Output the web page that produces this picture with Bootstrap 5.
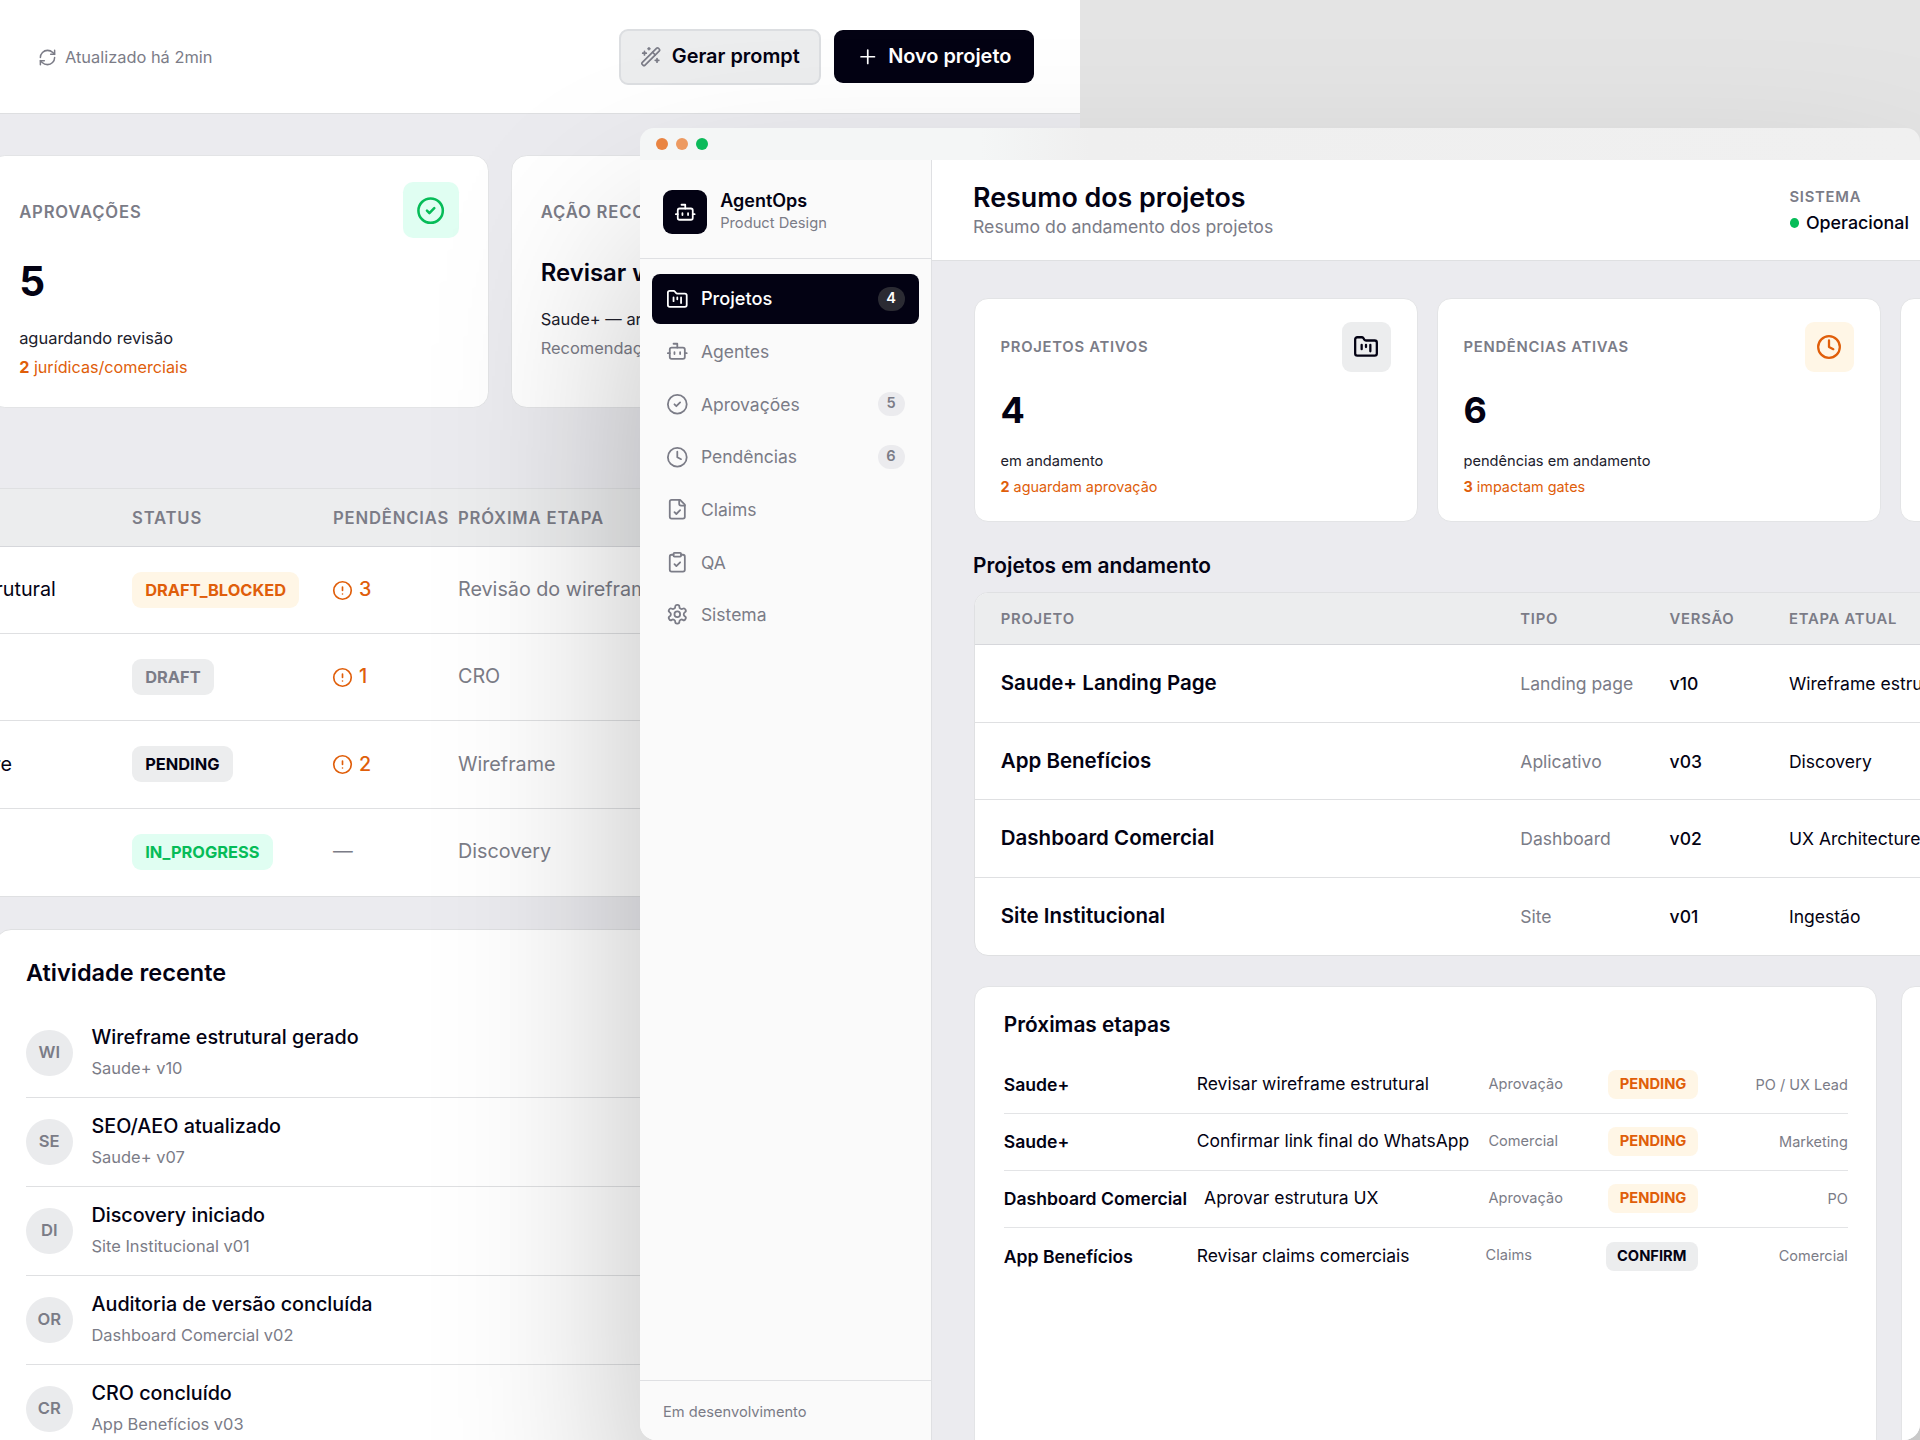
<!DOCTYPE html>
<html lang="pt-BR">
<head>
<meta charset="utf-8">
<meta name="viewport" content="width=device-width, initial-scale=1">
<title>AgentOps</title>
<link href="https://cdn.jsdelivr.net/npm/bootstrap@5.3.0/dist/css/bootstrap.min.css" rel="stylesheet">
<style>
:root{--ink:#030213;--body:#20202c;--soft:#7b7c87;--line:#dfe0e2;--canvas:#ebebef;--head:#ecedee;--orange:#e05e0a;--orange-bg:#fff6e6;--green:#06bc58;--green-bg:#e0fef2}
html,body{width:1920px;height:1440px;overflow:hidden}
body{font-family:Inter,"Liberation Sans",sans-serif;background:#e4e4e4;color:var(--ink);line-height:1.2}
.ico{width:1em;height:1em;fill:none;stroke:currentColor;stroke-width:1.9;stroke-linecap:round;stroke-linejoin:round;flex:none;display:block}
.soft,.stat-note.soft{color:var(--soft)}
.desk{position:relative;width:1920px;height:1440px;overflow:hidden}
.win-back{--s:1.125;position:absolute;left:0;top:0;width:1080px;height:1440px;background:var(--canvas)}
.win-front{--s:1;position:absolute;left:640px;top:128px;width:1280px;height:1312px;border-radius:16px;box-shadow:0 120px 200px rgba(0,0,0,.26)}

/* shared pieces, sized by the scale of their window */
.stat{width:calc(444.5px*var(--s));height:calc(224.6px*var(--s));border:1px solid #e3e4e6;border-radius:calc(14px*var(--s));padding:calc(23.4px*var(--s)) calc(25.9px*var(--s)) 0;background:#fff}
.caps{font-size:calc(14.8px*var(--s));font-weight:600;letter-spacing:.05em;color:var(--soft)}
.stat .caps{padding-top:3px}
.g-head.caps{padding-top:2px}
.tile{width:calc(49.7px*var(--s));height:calc(49.7px*var(--s));border-radius:calc(9px*var(--s));font-size:calc(26px*var(--s))}
.tile .ico{stroke-width:2.1}
.num{font-size:calc(36px*var(--s));font-weight:700;line-height:calc(44px*var(--s));margin-top:calc(16.5px*var(--s))}
.stat-note{font-size:calc(14.63px*var(--s));line-height:calc(26.3px*var(--s));color:var(--body)}
.num+.stat-note{margin-top:calc(15.5px*var(--s))}
.orange{color:var(--orange)}
.stat-note.orange{color:var(--orange);font-size:calc(14.4px*var(--s))}
.orange-tile{background:var(--orange-bg);color:var(--orange)}
.green-tile{background:var(--green-bg);color:var(--green)}
.grey-tile{background:var(--head)}
.grid-table{background:#fff;border:1px solid var(--line);overflow:hidden}
.g-head{height:calc(51.8px*var(--s));background:var(--head);border-bottom:1px solid #d6d7db}
.g-row{height:calc(77.5px*var(--s));border-bottom:1px solid var(--line);font-size:calc(17.55px*var(--s))}
.g-row:last-child{border-bottom:0}
.g-head>div,.g-row>div{flex:none;white-space:nowrap}
.tag{font-weight:700;border-radius:calc(8px*var(--s));line-height:1}

/* back window */
.b-top{height:114px;border-bottom:1px solid #dedfe1;background:#fff;padding:0 46px 0 38px}
.b-upd{font-size:16.4px;gap:8px;padding-top:2px}
.b-upd .ico{font-size:19px}
.b-btn{border-radius:9px;font-size:19.9px;font-weight:600;line-height:1;padding:0;gap:10px}
.b-btn .ico{font-size:21.5px}
.b-btn-l{width:202px;height:56px;background:var(--head);border:2px solid #dcdee1;color:var(--ink)}
.b-btn-d{width:200px;height:53px;background:var(--ink);border:0;color:#fff}
.b-stats{margin:41px 0 0 -11px;gap:21.5px}
.b-rev{font-size:23.9px;font-weight:600;line-height:34px;margin-top:18px;white-space:nowrap}
.b-rev-h{height:55.7px}
.b-rev-a{margin-top:14.5px}
.b-table{margin:80px 0 0 -137px;width:1400px}
.b-c1{width:268px}.b-c2{width:201px}.b-c3{width:125px}
.b-pend{display:flex;align-items:center;gap:6px;font-weight:500}
.b-pend .ico{font-size:21px;margin-left:-1px}
.b-tag{font-size:16.4px;height:36px;padding:0 13.2px;display:inline-flex;align-items:center}
.b-act{margin:32.3px 0 0 -5px;width:1020px;height:600px;background:#fff;border:1px solid var(--line);border-radius:16px;padding:28.5px 30px}
.b-act h2{font-size:23.5px;font-weight:600;line-height:30px;margin:0 0 20.5px}
.b-item{height:89px;border-bottom:1px solid var(--line);gap:19px}
.b-ava{width:46.5px;height:46.5px;border-radius:50%;background:#eaebed;font-size:16.6px;font-weight:600;color:var(--soft)}
.b-name{font-size:19.75px;font-weight:500;line-height:30.5px}
.b-sub{font-size:16.45px;line-height:30.5px;color:var(--soft)}

/* front window */
.f-bar{height:32px;border-radius:14px 14px 0 0;background:linear-gradient(90deg,#f4f6f6 0,#f4f6f6 340px,#efefef 450px,#f0f0f0 100%);padding-left:15.5px;gap:7.5px}
.f-dot{width:12.6px;height:12.6px;border-radius:50%}
.dot-a{background:#e98442}.dot-b{background:#ed9a61}.dot-c{background:#0cba5a}
.f-body{height:1280px;border-radius:0 0 16px 16px;overflow:hidden}
.f-side{width:292px;background:#fafafa;border-right:1px solid #dfe0e3}
.f-brand{height:99px;border-bottom:1px solid #dfe0e3;padding:6px 0 0 23px;gap:13px}
.f-logo{width:44.2px;height:44.5px;border-radius:9px;background:var(--ink);color:#fff;font-size:22.5px}
.f-name{font-size:18px;font-weight:600;line-height:23px}
.f-area{font-size:14.7px;line-height:23px}
.f-nav{padding:15.3px 12px 0 11.6px;gap:3.1px}
.f-link{height:49.5px;border-radius:8px;padding:0 14.5px 0 14.5px;font-size:17.5px;color:var(--soft)}
.f-link .ico{font-size:22.6px;margin-right:12.2px}
.f-link.on{background:var(--ink);color:#fff;font-weight:500;font-size:18.2px}
.f-count{width:27px;height:23.5px;border-radius:12px;background:#ebebee;font-size:14.6px;font-weight:600}
.on .f-count{background:#2b2b33}
.f-foot{height:60px;border-top:1px solid #dfe0e3;padding:4px 0 0 23px;font-size:14.65px;color:var(--soft)}
.f-main{width:988px;background:var(--canvas)}
.f-top{height:101px;background:#fff;border-bottom:1px solid #dfe0e2;padding:0 11px 0 41px}
.f-top h1{font-size:26.85px;font-weight:600;line-height:32px;margin:0}
.f-desc{font-size:17.65px;line-height:27px;color:var(--soft)}
.f-sys{width:119.5px;padding-top:1px}
.f-sys .caps{line-height:24px}
.f-ok{font-size:17.85px;font-weight:500;line-height:27px;gap:7px}
.f-ok i{width:10px;height:10px;border-radius:50%;background:var(--green)}
.f-stats{margin:36.6px 0 0 41.6px;gap:18.5px}
.f-stats .stat{flex:none}
.f-main h2{font-size:20.85px;font-weight:600;line-height:26px;margin:0}
.f-main h2.f-h{margin:31.3px 0 0 41px}
.f-table{margin:13px 0 0 41.6px;width:1200px;border-radius:14px;flex:none}
.f-c0{width:545.7px;padding-left:26.2px}.f-c1{width:149.3px}.f-c2{width:119.4px}
.f-proj{font-size:20.5px;font-weight:600}
.f-lower{margin:30px 0 0 41.6px;gap:24px}
.f-next{width:903.5px;height:520px;background:#fff;border:1px solid #e3e4e6;border-radius:14px;padding:25px 28.3px 0 29.2px;flex:none}
.f-next h2{margin-bottom:18.4px}
.n-row{height:57px;border-bottom:1px solid #e3e4e6;gap:17px;font-size:17.47px;white-space:nowrap}
.n-row:last-child{border:0}
.n-name{min-width:176px;font-weight:600;font-size:17.6px}
.n-kind{width:103px;font-size:14.6px}
.n-who{width:133px;font-size:14.5px;text-align:right}
.n-tag{font-size:14.7px;height:29px;padding:0 11.4px;display:inline-flex;align-items:center}
</style>
<script src="https://cdn.jsdelivr.net/npm/bootstrap@5.3.0/dist/js/bootstrap.bundle.min.js"></script>
</head>
<body>
<svg width="0" height="0" class="position-absolute">
<symbol id="i-kanban" viewBox="0 0 24 24"><path d="M4 20h16a2 2 0 0 0 2-2V8a2 2 0 0 0-2-2h-7.93a2 2 0 0 1-1.66-.9l-.82-1.2A2 2 0 0 0 7.93 3H4a2 2 0 0 0-2 2v13c0 1.1.9 2 2 2Z"/><path d="M8 10v4M12 10v2M16 10v6"/></symbol>
<symbol id="i-bot" viewBox="0 0 24 24"><path d="M12 8V4H8"/><rect x="4" y="8" width="16" height="12" rx="2"/><path d="M2 14h2M20 14h2M15 13v2M9 13v2"/></symbol>
<symbol id="i-check" viewBox="0 0 24 24"><circle cx="12" cy="12" r="10"/><path d="m9 12 2 2 4-4"/></symbol>
<symbol id="i-clock" viewBox="0 0 24 24"><circle cx="12" cy="12" r="10"/><path d="M12 6v6l4 2"/></symbol>
<symbol id="i-file" viewBox="0 0 24 24"><path d="M15 2H6a2 2 0 0 0-2 2v16a2 2 0 0 0 2 2h12a2 2 0 0 0 2-2V7Z"/><path d="M14 2v4a2 2 0 0 0 2 2h4"/><path d="m9 15 2 2 4-4"/></symbol>
<symbol id="i-clip" viewBox="0 0 24 24"><rect x="8" y="2" width="8" height="4" rx="1"/><path d="M16 4h2a2 2 0 0 1 2 2v14a2 2 0 0 1-2 2H6a2 2 0 0 1-2-2V6a2 2 0 0 1 2-2h2"/><path d="m9 14 2 2 4-4"/></symbol>
<symbol id="i-gear" viewBox="0 0 24 24"><path d="M12.22 2h-.44a2 2 0 0 0-2 2v.18a2 2 0 0 1-1 1.73l-.43.25a2 2 0 0 1-2 0l-.15-.08a2 2 0 0 0-2.73.73l-.22.38a2 2 0 0 0 .73 2.73l.15.1a2 2 0 0 1 1 1.72v.51a2 2 0 0 1-1 1.74l-.15.09a2 2 0 0 0-.73 2.73l.22.38a2 2 0 0 0 2.73.73l.15-.08a2 2 0 0 1 2 0l.43.25a2 2 0 0 1 1 1.73V20a2 2 0 0 0 2 2h.44a2 2 0 0 0 2-2v-.18a2 2 0 0 1 1-1.73l.43-.25a2 2 0 0 1 2 0l.15.08a2 2 0 0 0 2.73-.73l.22-.39a2 2 0 0 0-.73-2.73l-.15-.08a2 2 0 0 1-1-1.74v-.5a2 2 0 0 1 1-1.74l.15-.09a2 2 0 0 0 .73-2.73l-.22-.38a2 2 0 0 0-2.73-.73l-.15.08a2 2 0 0 1-2 0l-.43-.25a2 2 0 0 1-1-1.73V4a2 2 0 0 0-2-2z"/><circle cx="12" cy="12" r="3"/></symbol>
<symbol id="i-refresh" viewBox="0 0 24 24"><path d="M3 12a9 9 0 0 1 9-9 9.75 9.75 0 0 1 6.74 2.74L21 8"/><path d="M21 3v5h-5"/><path d="M21 12a9 9 0 0 1-9 9 9.75 9.75 0 0 1-6.74-2.74L3 16"/><path d="M8 16H3v5"/></symbol>
<symbol id="i-wand" viewBox="0 0 24 24"><path d="m21.64 3.64-1.28-1.28a1.21 1.21 0 0 0-1.72 0L2.36 18.64a1.21 1.21 0 0 0 0 1.72l1.28 1.28a1.2 1.2 0 0 0 1.72 0L21.64 5.36a1.2 1.2 0 0 0 0-1.72"/><path d="m14 7 3 3M5 6v4M19 14v4M10 2v2M7 8H3M21 16h-4M11 3H9"/></symbol>
<symbol id="i-plus" viewBox="0 0 24 24"><path d="M4.5 12h15M12 4.5v15"/></symbol>
<symbol id="i-alert" viewBox="0 0 24 24"><circle cx="12" cy="12" r="10"/><path d="M12 8v4M12 16h.01"/></symbol>
</svg>

<div class="desk">
  <section class="win-back overflow-hidden">
    <header class="b-top d-flex align-items-center justify-content-between">
      <div class="b-upd soft d-flex align-items-center"><svg class="ico"><use href="#i-refresh"/></svg><span>Atualizado há 2min</span></div>
      <div class="d-flex align-items-center" style="gap:13px">
        <button class="btn b-btn b-btn-l d-flex align-items-center justify-content-center"><svg class="ico soft"><use href="#i-wand"/></svg>Gerar prompt</button>
        <button class="btn b-btn b-btn-d d-flex align-items-center justify-content-center"><svg class="ico"><use href="#i-plus"/></svg>Novo projeto</button>
      </div>
    </header>
    <div class="b-stats d-flex">
      <div class="stat flex-shrink-0">
        <div class="d-flex justify-content-between align-items-center"><span class="caps">APROVAÇÕES</span><span class="tile green-tile d-flex align-items-center justify-content-center"><svg class="ico"><use href="#i-check"/></svg></span></div>
        <div class="num">5</div>
        <div class="stat-note">aguardando revisão</div>
        <div class="stat-note orange"><b>2</b> jurídicas/comerciais</div>
      </div>
      <div class="stat flex-shrink-0">
        <div class="b-rev-h d-flex align-items-center"><span class="caps">AÇÃO RECOMENDADA</span></div>
        <div class="b-rev">Revisar wireframe</div>
        <div class="stat-note b-rev-a">Saude+ — arquitetura</div>
        <div class="stat-note soft">Recomendação</div>
      </div>
    </div>
    <div class="grid-table b-table">
      <div class="g-head caps d-flex align-items-center"><div class="b-c1"></div><div class="b-c2">STATUS</div><div class="b-c3">PENDÊNCIAS</div><div>PRÓXIMA ETAPA</div></div>
      <div class="g-row d-flex align-items-center"><div class="b-c1">Wireframe estrutural</div><div class="b-c2"><span class="tag b-tag orange-tile">DRAFT_BLOCKED</span></div><div class="b-c3 orange b-pend"><svg class="ico"><use href="#i-alert"/></svg>3</div><div class="soft">Revisão do wireframe</div></div>
      <div class="g-row d-flex align-items-center"><div class="b-c1"></div><div class="b-c2"><span class="tag b-tag grey-tile soft">DRAFT</span></div><div class="b-c3 orange b-pend"><svg class="ico"><use href="#i-alert"/></svg>1</div><div class="soft">CRO</div></div>
      <div class="g-row d-flex align-items-center"><div class="b-c1">UX Architecture</div><div class="b-c2"><span class="tag b-tag grey-tile">PENDING</span></div><div class="b-c3 orange b-pend"><svg class="ico"><use href="#i-alert"/></svg>2</div><div class="soft">Wireframe</div></div>
      <div class="g-row d-flex align-items-center"><div class="b-c1"></div><div class="b-c2"><span class="tag b-tag green-tile">IN_PROGRESS</span></div><div class="b-c3 soft">—</div><div class="soft">Discovery</div></div>
    </div>
    <div class="b-act">
      <h2>Atividade recente</h2>
      <div class="b-item d-flex align-items-center"><span class="b-ava d-flex align-items-center justify-content-center">WI</span><div><div class="b-name">Wireframe estrutural gerado</div><div class="b-sub">Saude+ v10</div></div></div>
      <div class="b-item d-flex align-items-center"><span class="b-ava d-flex align-items-center justify-content-center">SE</span><div><div class="b-name">SEO/AEO atualizado</div><div class="b-sub">Saude+ v07</div></div></div>
      <div class="b-item d-flex align-items-center"><span class="b-ava d-flex align-items-center justify-content-center">DI</span><div><div class="b-name">Discovery iniciado</div><div class="b-sub">Site Institucional v01</div></div></div>
      <div class="b-item d-flex align-items-center"><span class="b-ava d-flex align-items-center justify-content-center">OR</span><div><div class="b-name">Auditoria de versão concluída</div><div class="b-sub">Dashboard Comercial v02</div></div></div>
      <div class="b-item d-flex align-items-center"><span class="b-ava d-flex align-items-center justify-content-center">CR</span><div><div class="b-name">CRO concluído</div><div class="b-sub">App Benefícios v03</div></div></div>
    </div>
  </section>

  <section class="win-front">
    <div class="f-bar d-flex align-items-center"><span class="f-dot dot-a"></span><span class="f-dot dot-b"></span><span class="f-dot dot-c"></span></div>
    <div class="f-body d-flex">
      <aside class="f-side d-flex flex-column flex-shrink-0">
        <div class="f-brand d-flex align-items-center">
          <span class="f-logo d-flex align-items-center justify-content-center"><svg class="ico"><use href="#i-bot"/></svg></span>
          <div><div class="f-name">AgentOps</div><div class="f-area soft">Product Design</div></div>
        </div>
        <nav class="f-nav d-flex flex-column flex-grow-1">
          <a class="f-link on d-flex align-items-center text-decoration-none"><svg class="ico"><use href="#i-kanban"/></svg>Projetos<span class="f-count ms-auto d-flex align-items-center justify-content-center">4</span></a>
          <a class="f-link d-flex align-items-center text-decoration-none"><svg class="ico"><use href="#i-bot"/></svg>Agentes</a>
          <a class="f-link d-flex align-items-center text-decoration-none"><svg class="ico"><use href="#i-check"/></svg>Aprovações<span class="f-count ms-auto d-flex align-items-center justify-content-center">5</span></a>
          <a class="f-link d-flex align-items-center text-decoration-none"><svg class="ico"><use href="#i-clock"/></svg>Pendências<span class="f-count ms-auto d-flex align-items-center justify-content-center">6</span></a>
          <a class="f-link d-flex align-items-center text-decoration-none"><svg class="ico"><use href="#i-file"/></svg>Claims</a>
          <a class="f-link d-flex align-items-center text-decoration-none"><svg class="ico"><use href="#i-clip"/></svg>QA</a>
          <a class="f-link d-flex align-items-center text-decoration-none"><svg class="ico"><use href="#i-gear"/></svg>Sistema</a>
        </nav>
        <div class="f-foot d-flex align-items-center">Em desenvolvimento</div>
      </aside>
      <main class="f-main flex-shrink-0 overflow-hidden">
        <header class="f-top d-flex justify-content-between align-items-center">
          <div><h1>Resumo dos projetos</h1><div class="f-desc">Resumo do andamento dos projetos</div></div>
          <div class="f-sys flex-shrink-0"><div class="caps">SISTEMA</div><div class="f-ok d-flex align-items-center"><i></i>Operacional</div></div>
        </header>
        <div class="f-stats d-flex">
          <div class="stat">
            <div class="d-flex justify-content-between align-items-center"><span class="caps">PROJETOS ATIVOS</span><span class="tile grey-tile d-flex align-items-center justify-content-center"><svg class="ico"><use href="#i-kanban"/></svg></span></div>
            <div class="num">4</div>
            <div class="stat-note">em andamento</div>
            <div class="stat-note orange"><b>2</b> aguardam aprovação</div>
          </div>
          <div class="stat">
            <div class="d-flex justify-content-between align-items-center"><span class="caps">PENDÊNCIAS ATIVAS</span><span class="tile orange-tile d-flex align-items-center justify-content-center"><svg class="ico"><use href="#i-clock"/></svg></span></div>
            <div class="num">6</div>
            <div class="stat-note">pendências em andamento</div>
            <div class="stat-note orange"><b>3</b> impactam gates</div>
          </div>
          <div class="stat"></div>
        </div>
        <h2 class="f-h">Projetos em andamento</h2>
        <div class="grid-table f-table">
          <div class="g-head caps d-flex align-items-center"><div class="f-c0">PROJETO</div><div class="f-c1">TIPO</div><div class="f-c2">VERSÃO</div><div>ETAPA ATUAL</div></div>
          <div class="g-row d-flex align-items-center"><div class="f-c0 f-proj">Saude+ Landing Page</div><div class="f-c1 soft">Landing page</div><div class="f-c2 fw-medium">v10</div><div>Wireframe estrutural</div></div>
          <div class="g-row d-flex align-items-center"><div class="f-c0 f-proj">App Benefícios</div><div class="f-c1 soft">Aplicativo</div><div class="f-c2 fw-medium">v03</div><div>Discovery</div></div>
          <div class="g-row d-flex align-items-center"><div class="f-c0 f-proj">Dashboard Comercial</div><div class="f-c1 soft">Dashboard</div><div class="f-c2 fw-medium">v02</div><div>UX Architecture</div></div>
          <div class="g-row d-flex align-items-center"><div class="f-c0 f-proj">Site Institucional</div><div class="f-c1 soft">Site</div><div class="f-c2 fw-medium">v01</div><div>Ingestão</div></div>
        </div>
        <div class="f-lower d-flex">
          <div class="f-next">
            <h2>Próximas etapas</h2>
            <div class="n-row d-flex align-items-center"><span class="n-name">Saude+</span><span class="flex-grow-1">Revisar wireframe estrutural</span><span class="n-kind soft">Aprovação</span><span class="tag n-tag orange-tile">PENDING</span><span class="n-who soft">PO / UX Lead</span></div>
            <div class="n-row d-flex align-items-center"><span class="n-name">Saude+</span><span class="flex-grow-1">Confirmar link final do WhatsApp</span><span class="n-kind soft">Comercial</span><span class="tag n-tag orange-tile">PENDING</span><span class="n-who soft">Marketing</span></div>
            <div class="n-row d-flex align-items-center"><span class="n-name">Dashboard Comercial</span><span class="flex-grow-1">Aprovar estrutura UX</span><span class="n-kind soft">Aprovação</span><span class="tag n-tag orange-tile">PENDING</span><span class="n-who soft">PO</span></div>
            <div class="n-row d-flex align-items-center"><span class="n-name">App Benefícios</span><span class="flex-grow-1">Revisar claims comerciais</span><span class="n-kind soft">Claims</span><span class="tag n-tag grey-tile">CONFIRM</span><span class="n-who soft">Comercial</span></div>
          </div>
          <div class="f-next"></div>
        </div>
      </main>
    </div>
  </section>
</div>
</body>
</html>
